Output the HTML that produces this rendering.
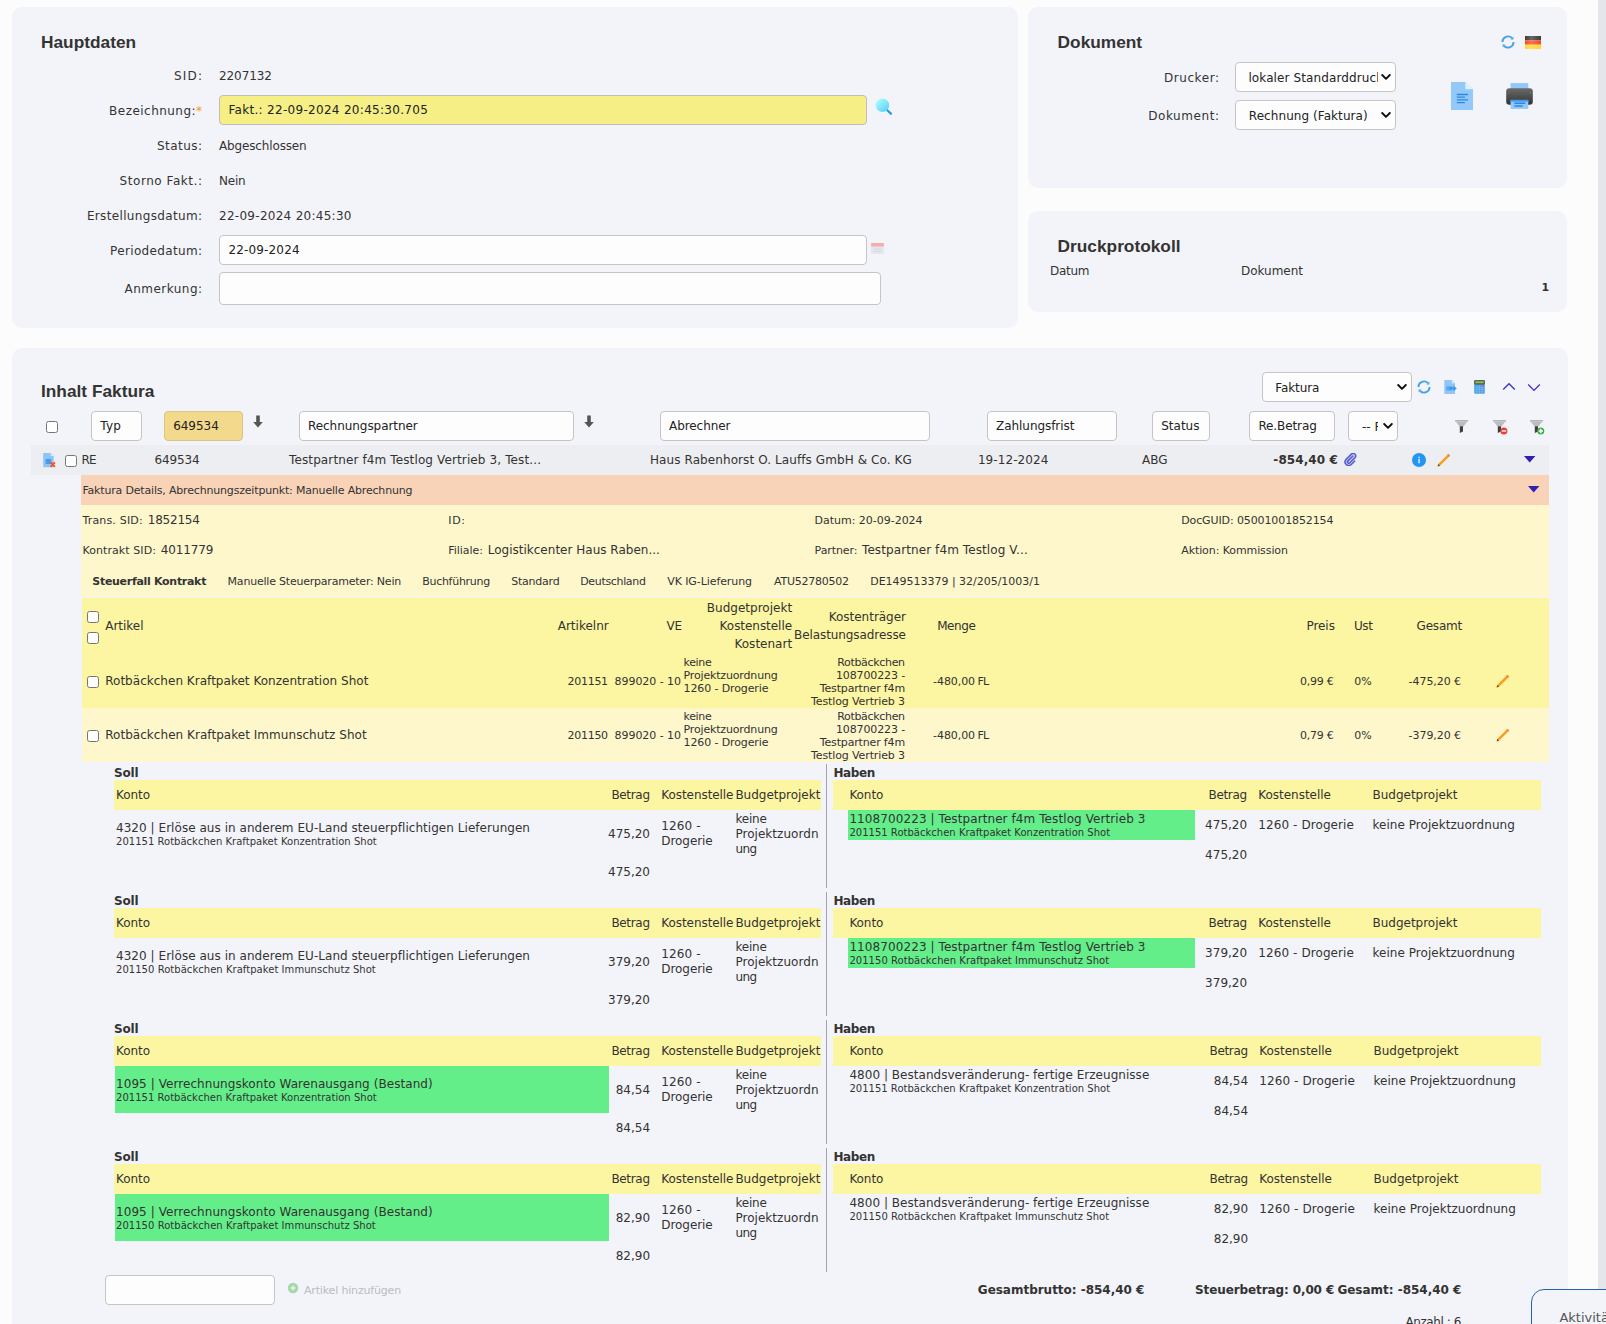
<!DOCTYPE html>
<html lang="de"><head><meta charset="utf-8"><title>Faktura</title><style>
html,body{margin:0;padding:0}
body{width:1606px;height:1324px;overflow:hidden;position:relative;background:#fcfcfd;color:#333;font-family:"DejaVu Sans","Liberation Sans",sans-serif}
.b{position:absolute;display:block}
.t{position:absolute;white-space:nowrap;display:block}
.a{font-family:"Liberation Sans",sans-serif}
</style></head><body>
<div class="b" style="left:12px;top:7px;width:1006px;height:321px;background:#f3f4f9;border-radius:10px;"></div>
<div class="b" style="left:1028px;top:7px;width:539px;height:181px;background:#f3f4f9;border-radius:10px;"></div>
<div class="b" style="left:1028px;top:211px;width:539px;height:101px;background:#f3f4f9;border-radius:10px;"></div>
<div class="b" style="left:12px;top:348px;width:1556px;height:1052px;background:#f3f4f9;border-radius:10px;"></div>
<div class="b" style="left:1598px;top:0px;width:8px;height:1324px;background:#e5e6eb;"></div>
<span class="t a" style="top:31.51px;font-size:17.3px;line-height:21px;left:41.00px;font-weight:bold;color:#333;">Hauptdaten</span>
<span class="t" style="top:67.85px;font-size:12px;line-height:16px;right:1402.80px;letter-spacing:1.200px;">SID:</span>
<span class="t" style="top:102.85px;font-size:12px;line-height:16px;right:1403.53px;letter-spacing:0.466px;">Bezeichnung:<span style="color:#f7941d">*</span></span>
<span class="t" style="top:137.85px;font-size:12px;line-height:16px;right:1403.53px;letter-spacing:0.470px;">Status:</span>
<span class="t" style="top:172.85px;font-size:12px;line-height:16px;right:1403.45px;letter-spacing:0.548px;">Storno Fakt.:</span>
<span class="t" style="top:207.85px;font-size:12px;line-height:16px;right:1403.66px;letter-spacing:0.342px;">Erstellungsdatum:</span>
<span class="t" style="top:242.85px;font-size:12px;line-height:16px;right:1403.66px;letter-spacing:0.339px;">Periodedatum:</span>
<span class="t" style="top:280.85px;font-size:12px;line-height:16px;right:1403.53px;letter-spacing:0.469px;">Anmerkung:</span>
<span class="t" style="top:67.85px;font-size:12px;line-height:16px;left:219.00px;letter-spacing:-0.076px;">2207132</span>
<div class="b" style="left:219px;top:95px;width:648px;height:30px;background:#f5ef85;border:1px solid #c4bcbc;border-radius:4px;box-sizing:border-box;"></div>
<span class="t" style="top:101.85px;font-size:12px;line-height:16px;left:228.40px;color:#222;letter-spacing:0.305px;">Fakt.: 22-09-2024 20:45:30.705</span>
<span class="t" style="top:137.85px;font-size:12px;line-height:16px;left:219.00px;letter-spacing:-0.146px;">Abgeschlossen</span>
<span class="t" style="top:172.85px;font-size:12px;line-height:16px;left:219.00px;letter-spacing:-0.237px;">Nein</span>
<span class="t" style="top:207.85px;font-size:12px;line-height:16px;left:219.00px;letter-spacing:0.280px;">22-09-2024 20:45:30</span>
<div class="b" style="left:219px;top:235px;width:648px;height:30px;background:#fdfdfe;border:1px solid #c8c3c5;border-radius:4px;box-sizing:border-box;"></div>
<span class="t" style="top:241.85px;font-size:12px;line-height:16px;left:228.40px;color:#222;letter-spacing:0.161px;">22-09-2024</span>
<div class="b" style="left:219px;top:272px;width:662px;height:33px;background:#fdfdfe;border:1px solid #c8c3c5;border-radius:4px;box-sizing:border-box;"></div>
<svg class="b" style="left:875px;top:98px" width="19" height="19" viewBox="0 0 19 19"><defs><linearGradient id="mg" x1="0.15" y1="0.1" x2="0.85" y2="0.9"><stop offset="0" stop-color="#a8fbff"/><stop offset="1" stop-color="#5fd3f4"/></linearGradient></defs><path d="M12 12 L15.9 15.7" stroke="#2b9be0" stroke-width="2.3" stroke-linecap="round"/><circle cx="7.45" cy="7.25" r="6.7" fill="url(#mg)"/></svg>
<svg class="b" style="left:870px;top:241px" width="15" height="14" viewBox="0 0 15 14"><rect x="1" y="2" width="13" height="11" rx="1.5" fill="#e6e7ec"/><rect x="1" y="2" width="13" height="3.5" rx="1" fill="#f3aeae"/><path d="M3.5 8h8M3.5 10.5h8" stroke="#d5d8de" stroke-width="1"/></svg>
<span class="t a" style="top:31.51px;font-size:17.3px;line-height:21px;left:1057.60px;font-weight:bold;color:#333;">Dokument</span>
<span class="t" style="top:69.85px;font-size:12px;line-height:16px;right:386.42px;letter-spacing:0.579px;">Drucker:</span>
<span class="t" style="top:107.85px;font-size:12px;line-height:16px;right:386.43px;letter-spacing:0.575px;">Dokument:</span>
<div class="b" style="left:1235px;top:62px;width:161px;height:30px;background:#fdfdfe;border:1px solid #c8c3c5;border-radius:4px;box-sizing:border-box;"></div>
<span class="t" style="top:70.05px;font-size:12px;line-height:16px;left:1248.40px;color:#222;letter-spacing:0.11px;width:129.3px;overflow:hidden;">lokaler Standarddrucker</span>
<svg class="b" style="left:1381px;top:72.7px" width="10" height="8" viewBox="0 0 10 8"><path d="M1.2 2 L5 5.8 L8.8 2" fill="none" stroke="#111" stroke-width="1.9" stroke-linecap="round" stroke-linejoin="round"/></svg>
<div class="b" style="left:1235px;top:100px;width:161px;height:30px;background:#fdfdfe;border:1px solid #c8c3c5;border-radius:4px;box-sizing:border-box;"></div>
<span class="t" style="top:108.05px;font-size:12px;line-height:16px;left:1248.80px;color:#222;letter-spacing:0.070px;">Rechnung (Faktura)</span>
<svg class="b" style="left:1381px;top:110.7px" width="10" height="8" viewBox="0 0 10 8"><path d="M1.2 2 L5 5.8 L8.8 2" fill="none" stroke="#111" stroke-width="1.9" stroke-linecap="round" stroke-linejoin="round"/></svg>
<svg class="b" style="left:1501px;top:35px" width="14" height="14" viewBox="0 0 14 14"><g fill="none" stroke="#45a3e8" stroke-width="1.9"><path d="M1.4 6.9A5.6 5.6 0 0 1 10.9 3"/><path d="M12.6 7.1A5.6 5.6 0 0 1 3.1 11"/></g><path d="M12.4 4.6 L12.4 1.6 L9.5 4.4Z" fill="#45a3e8"/><path d="M1.6 9.4 L1.6 12.4 L4.5 9.6Z" fill="#45a3e8"/></svg>
<svg class="b" style="left:1525px;top:35.8px" width="16" height="13" viewBox="0 0 16 13"><defs><linearGradient id="gl" x1="0" y1="0" x2="1" y2="0"><stop offset="0" stop-color="#fff" stop-opacity="0"/><stop offset="0.4" stop-color="#fff" stop-opacity="0.22"/><stop offset="1" stop-color="#fff" stop-opacity="0"/></linearGradient></defs><rect x="0" y="0" width="16" height="4.4" fill="#3d3d3d"/><rect x="0" y="4.4" width="16" height="4.3" fill="#fb4a1c"/><rect x="0" y="8.7" width="16" height="4.3" fill="#ffd832"/><rect x="0" y="0" width="16" height="13" fill="url(#gl)"/></svg>
<svg class="b" style="left:1451px;top:82px" width="22" height="28" viewBox="0 0 22 28"><path d="M0 0h14.4l7.6 7.2v20.8h-22z" fill="#93c9f8"/><path d="M14.4 0v7.2h7.6z" fill="#e0f0fd"/><path d="M5.8 12.5h11.2M5.8 17.9h11.2" stroke="#2f86de" stroke-width="1.3"/><path d="M5.8 15.2h8.1M5.8 20.6h8.1" stroke="#2f86de" stroke-width="1.3"/></svg>
<svg class="b" style="left:1505.5px;top:83px" width="27" height="26" viewBox="0 0 27 26"><defs><linearGradient id="pg" x1="0" y1="0" x2="0" y2="1"><stop offset="0" stop-color="#6a6a6a"/><stop offset="1" stop-color="#333"/></linearGradient></defs><rect x="4.6" y="0.1" width="17.7" height="7.5" fill="#90c8f8"/><rect x="0.2" y="5.3" width="26.6" height="16.4" rx="3.2" fill="url(#pg)"/><rect x="4.6" y="16.9" width="17.7" height="9" fill="#90c8f8"/><rect x="4.6" y="16.9" width="17.7" height="1.8" fill="#3d9bef"/><path d="M8.4 20.3h10.8M8.4 23h8.2" stroke="#2f86de" stroke-width="1.4"/><circle cx="24.2" cy="9.7" r="0.8" fill="#2fae62"/></svg>
<span class="t a" style="top:235.51px;font-size:17.3px;line-height:21px;left:1057.60px;font-weight:bold;color:#333;">Druckprotokoll</span>
<span class="t" style="top:262.85px;font-size:12px;line-height:16px;left:1050.00px;letter-spacing:-0.298px;">Datum</span>
<span class="t" style="top:262.85px;font-size:12px;line-height:16px;left:1241.00px;letter-spacing:-0.022px;">Dokument</span>
<span class="t" style="top:279.69px;font-size:11px;line-height:15px;left:1541.50px;font-weight:bold;">1</span>
<span class="t a" style="top:381.01px;font-size:17.3px;line-height:21px;left:41.00px;font-weight:bold;color:#333;">Inhalt Faktura</span>
<div class="b" style="left:1262px;top:372px;width:150px;height:30px;background:#fdfdfe;border:1px solid #c8c3c5;border-radius:4px;box-sizing:border-box;"></div>
<span class="t" style="top:380.05px;font-size:12px;line-height:16px;left:1275.30px;color:#222;letter-spacing:-0.117px;">Faktura</span>
<svg class="b" style="left:1397px;top:382.7px" width="10" height="8" viewBox="0 0 10 8"><path d="M1.2 2 L5 5.8 L8.8 2" fill="none" stroke="#111" stroke-width="1.9" stroke-linecap="round" stroke-linejoin="round"/></svg>
<svg class="b" style="left:1417px;top:380px" width="14" height="14" viewBox="0 0 14 14"><g fill="none" stroke="#45a3e8" stroke-width="1.9"><path d="M1.4 6.9A5.6 5.6 0 0 1 10.9 3"/><path d="M12.6 7.1A5.6 5.6 0 0 1 3.1 11"/></g><path d="M12.4 4.6 L12.4 1.6 L9.5 4.4Z" fill="#45a3e8"/><path d="M1.6 9.4 L1.6 12.4 L4.5 9.6Z" fill="#45a3e8"/></svg>
<svg class="b" style="left:1443.5px;top:380px" width="13" height="14" viewBox="0 0 13 14"><path d="M0.3 0h7.5l3.2 3.2v10.8h-10.7z" fill="#93c6f6"/><path d="M7.8 0v3.2h3.2z" fill="#d3e8fb"/><rect x="2.3" y="6.2" width="6" height="4.4" fill="#5aa9ef"/><path d="M5 7.3h4.6v-1.7l3.2 2.8l-3.2 2.8v-1.7h-4.6z" fill="#3d9bef"/></svg>
<svg class="b" style="left:1473.5px;top:380px" width="11" height="14" viewBox="0 0 11 14"><rect x="0.2" y="0.2" width="10.6" height="13.6" rx="1" fill="#4a9eea"/><rect x="0.2" y="0.2" width="10.6" height="4.2" rx="0.8" fill="#4b4f47"/><rect x="1.2" y="1.3" width="8.6" height="2" fill="#8bc34a"/><path d="M3 5v8.6M5.5 5v8.6M8 5v8.6M0.4 7.4h10.2M0.4 9.6h10.2M0.4 11.8h10.2" stroke="#8cc3f3" stroke-width="0.5"/><rect x="8.2" y="5.2" width="1.4" height="1.6" fill="#e0506a"/></svg>
<svg class="b" style="left:1502px;top:382px" width="14" height="9" viewBox="0 0 14 9"><path d="M1.2 7.6 L7 1.8 L12.8 7.6" fill="none" stroke="#3c35c9" stroke-width="1.35"/></svg>
<svg class="b" style="left:1527px;top:383px" width="14" height="9" viewBox="0 0 14 9"><path d="M1.2 1.6 L7 7.4 L12.8 1.6" fill="none" stroke="#3c35c9" stroke-width="1.35"/></svg>
<svg class="b" style="left:1454.5px;top:419.6px" width="13" height="14" viewBox="0 0 13 14"><path d="M0 0.3h13v1.1h-13z" fill="#9a9a9a"/><path d="M0.6 1.4h11.8l-4 5h-3.8z" fill="#bdbdbd"/><path d="M4.8 6.2h3.2v5.2l-3.2 1.6z" fill="#3f3f3f"/></svg>
<svg class="b" style="left:1492.7px;top:419.6px" width="15" height="15" viewBox="0 0 15 15"><path d="M0 0.3h13v1.1h-13z" fill="#9a9a9a"/><path d="M0.6 1.4h11.8l-4 5h-3.8z" fill="#bdbdbd"/><path d="M4.8 6.2h3.2v5.2l-3.2 1.6z" fill="#3f3f3f"/><circle cx="10.9" cy="11" r="3.5" fill="#f03e33"/><rect x="8.7" y="10.3" width="4.4" height="1.4" fill="#fff"/></svg>
<svg class="b" style="left:1529.8px;top:419.6px" width="15" height="15" viewBox="0 0 15 15"><path d="M0 0.3h13v1.1h-13z" fill="#9a9a9a"/><path d="M0.6 1.4h11.8l-4 5h-3.8z" fill="#bdbdbd"/><path d="M4.8 6.2h3.2v5.2l-3.2 1.6z" fill="#3f3f3f"/><circle cx="10.8" cy="11" r="3.5" fill="#3fae49"/><rect x="8.6" y="10.3" width="4.4" height="1.4" fill="#fff"/><rect x="10.1" y="8.8" width="1.4" height="4.4" fill="#fff"/></svg>
<div class="b" style="left:45.5px;top:421px;width:12.0px;height:12px;background:#fff;border:1px solid #767676;border-radius:2.5px;box-sizing:border-box;"></div>
<div class="b" style="left:91px;top:411px;width:50.5px;height:30px;background:#fdfdfe;border:1px solid #c8c3c5;border-radius:4px;box-sizing:border-box;"></div>
<span class="t" style="top:418.15px;font-size:12px;line-height:16px;left:100.20px;color:#222;letter-spacing:0.256px;">Typ</span>
<div class="b" style="left:164px;top:411px;width:78.5px;height:30px;background:#f3d98b;border:1px solid #d9c58a;border-radius:4px;box-sizing:border-box;"></div>
<span class="t" style="top:418.15px;font-size:12px;line-height:16px;left:173.20px;color:#222;letter-spacing:-0.042px;">649534</span>
<div class="b" style="left:299px;top:411px;width:274.5px;height:30px;background:#fdfdfe;border:1px solid #c8c3c5;border-radius:4px;box-sizing:border-box;"></div>
<span class="t" style="top:418.15px;font-size:12px;line-height:16px;left:308.00px;color:#222;letter-spacing:-0.054px;">Rechnungspartner</span>
<div class="b" style="left:660px;top:411px;width:269.5px;height:30px;background:#fdfdfe;border:1px solid #c8c3c5;border-radius:4px;box-sizing:border-box;"></div>
<span class="t" style="top:418.15px;font-size:12px;line-height:16px;left:669.00px;color:#222;letter-spacing:-0.064px;">Abrechner</span>
<div class="b" style="left:987px;top:411px;width:129.5px;height:30px;background:#fdfdfe;border:1px solid #c8c3c5;border-radius:4px;box-sizing:border-box;"></div>
<span class="t" style="top:418.15px;font-size:12px;line-height:16px;left:996.10px;color:#222;letter-spacing:-0.062px;">Zahlungsfrist</span>
<div class="b" style="left:1152px;top:411px;width:57.5px;height:30px;background:#fdfdfe;border:1px solid #c8c3c5;border-radius:4px;box-sizing:border-box;"></div>
<span class="t" style="top:418.15px;font-size:12px;line-height:16px;left:1161.20px;color:#222;letter-spacing:0.010px;">Status</span>
<div class="b" style="left:1249px;top:411px;width:85.5px;height:30px;background:#fdfdfe;border:1px solid #c8c3c5;border-radius:4px;box-sizing:border-box;"></div>
<span class="t" style="top:418.15px;font-size:12px;line-height:16px;left:1258.40px;color:#222;letter-spacing:-0.104px;">Re.Betrag</span>
<div class="b" style="left:1348px;top:411px;width:49.5px;height:30px;background:#fdfdfe;border:1px solid #c8c3c5;border-radius:4px;box-sizing:border-box;"></div>
<span class="t" style="top:419.05px;font-size:12px;line-height:16px;left:1362.00px;color:#222;width:15.6px;overflow:hidden;">-- F</span>
<svg class="b" style="left:1382.5px;top:421.7px" width="10" height="8" viewBox="0 0 10 8"><path d="M1.2 2 L5 5.8 L8.8 2" fill="none" stroke="#111" stroke-width="1.9" stroke-linecap="round" stroke-linejoin="round"/></svg>
<svg class="b" style="left:253px;top:415px" width="10" height="13" viewBox="0 0 10 13"><path d="M3.2 0.5h3.6v6.5h3l-4.8 5.5l-4.8-5.5h3z" fill="#555"/></svg>
<svg class="b" style="left:584px;top:415px" width="10" height="13" viewBox="0 0 10 13"><path d="M3.2 0.5h3.6v6.5h3l-4.8 5.5l-4.8-5.5h3z" fill="#555"/></svg>
<div class="b" style="left:31px;top:445px;width:1518px;height:30px;background:#edeef1;"></div>
<div class="b" style="left:65.3px;top:455px;width:12.0px;height:12px;background:#fff;border:1px solid #767676;border-radius:2.5px;box-sizing:border-box;"></div>
<span class="t" style="top:452.35px;font-size:12px;line-height:16px;left:81.50px;letter-spacing:-0.722px;">RE</span>
<span class="t" style="top:452.35px;font-size:12px;line-height:16px;left:154.50px;letter-spacing:-0.142px;">649534</span>
<span class="t" style="top:452.35px;font-size:12px;line-height:16px;left:289.00px;letter-spacing:0.124px;">Testpartner f4m Testlog Vertrieb 3, Test...</span>
<span class="t" style="top:452.35px;font-size:12px;line-height:16px;left:650.00px;letter-spacing:0.089px;">Haus Rabenhorst O. Lauffs GmbH &amp; Co. KG</span>
<span class="t" style="top:452.35px;font-size:12px;line-height:16px;left:977.90px;letter-spacing:0.083px;">19-12-2024</span>
<span class="t" style="top:452.35px;font-size:12px;line-height:16px;left:1142.10px;letter-spacing:-0.016px;">ABG</span>
<span class="t" style="top:452.35px;font-size:12px;line-height:16px;right:268.12px;font-weight:bold;letter-spacing:0.084px;">-854,40 €</span>
<svg class="b" style="left:42.6px;top:452.8px" width="13" height="15" viewBox="0 0 13 15"><path d="M0.2 0h7.6l2.9 2.9v11.4h-10.5z" fill="#8ec5f7"/><path d="M7.8 0v2.9h2.9z" fill="#d6eafc"/><rect x="2.6" y="6" width="5.6" height="5" fill="#4a9be8"/><path d="M7.6 9.4 L12 13.8 M12 9.4 L7.6 13.8" stroke="#f4511e" stroke-width="1.7"/></svg>
<svg class="b" style="left:1343.8px;top:452.9px" width="13" height="13" viewBox="0 0 13 13"><g transform="scale(0.92)"><path d="M9.6 3.3 L4.2 8.7 a1.4 1.4 0 0 0 2 2 L12 4.9 a2.7 2.7 0 0 0 -3.8 -3.8 L2.2 7.1 a3.9 3.9 0 0 0 5.5 5.5 L11.5 8.8" fill="none" stroke="#7d85e0" stroke-width="2.1" stroke-linecap="round" opacity="0.8"/><path d="M9.6 3.3 L4.2 8.7 a1.4 1.4 0 0 0 2 2 L12 4.9 a2.7 2.7 0 0 0 -3.8 -3.8 L2.2 7.1 a3.9 3.9 0 0 0 5.5 5.5 L11.5 8.8" fill="none" stroke="#535bcc" stroke-width="1.2" stroke-linecap="round"/></g></svg>
<svg class="b" style="left:1411.9px;top:452.9px" width="14" height="14" viewBox="0 0 14 14"><circle cx="7" cy="7" r="7" fill="#2196f3"/><rect x="6.3" y="6" width="1.5" height="4.3" fill="#fff" opacity="0.82"/><rect x="6.3" y="3.7" width="1.5" height="1.5" fill="#fff" opacity="0.82"/></svg>
<svg class="b" style="left:1437px;top:453px" width="14" height="14" viewBox="0 0 14 14"><path d="M1.6 12.4 L12.4 1.6" stroke="#f7a01b" stroke-width="2.6"/><path d="M11.2 0.9 L13.1 2.8 L12.1 3.8 L10.2 1.9Z" fill="#ee7f86"/><path d="M0.5 13.5 L1.3 10.9 L3.1 12.7Z" fill="#5d5138"/></svg>
<svg class="b" style="left:1524px;top:456.3px" width="12" height="7" viewBox="0 0 12 7"><path d="M0 0h11.4l-5.7 6.6z" fill="#2e1fb8"/></svg>
<div class="b" style="left:81px;top:475px;width:1468px;height:30px;background:#f8d3b8;"></div>
<svg class="b" style="left:1528px;top:486.2px" width="12" height="7" viewBox="0 0 12 7"><path d="M0 0h11.4l-5.7 6.6z" fill="#2e1fb8"/></svg>
<span class="t" style="top:482.69px;font-size:11px;line-height:15px;left:82.40px;letter-spacing:-0.179px;">Faktura Details, Abrechnungszeitpunkt: Manuelle Abrechnung</span>
<div class="b" style="left:81px;top:505px;width:1468px;height:92px;background:#fef7cc;"></div>
<span class="t" style="top:512.69px;font-size:11px;line-height:15px;left:82.40px;letter-spacing:0.183px;">Trans. SID:</span>
<span class="t" style="top:511.85px;font-size:12px;line-height:16px;left:147.80px;letter-spacing:-0.226px;">1852154</span>
<span class="t" style="top:512.69px;font-size:11px;line-height:15px;left:448.30px;letter-spacing:0.639px;">ID:</span>
<span class="t" style="top:512.69px;font-size:11px;line-height:15px;left:814.60px;letter-spacing:-0.021px;">Datum: 20-09-2024</span>
<span class="t" style="top:512.69px;font-size:11px;line-height:15px;left:1181.20px;letter-spacing:-0.111px;">DocGUID: 05001001852154</span>
<span class="t" style="top:542.69px;font-size:11px;line-height:15px;left:82.40px;letter-spacing:0.081px;">Kontrakt SID:</span>
<span class="t" style="top:541.85px;font-size:12px;line-height:16px;left:160.70px;letter-spacing:-0.142px;">4011779</span>
<span class="t" style="top:542.69px;font-size:11px;line-height:15px;left:448.30px;letter-spacing:-0.053px;">Filiale:</span>
<span class="t" style="top:541.85px;font-size:12px;line-height:16px;left:487.70px;letter-spacing:0.009px;">Logistikcenter Haus Raben...</span>
<span class="t" style="top:542.69px;font-size:11px;line-height:15px;left:814.60px;letter-spacing:-0.086px;">Partner:</span>
<span class="t" style="top:541.85px;font-size:12px;line-height:16px;left:862.00px;letter-spacing:0.093px;">Testpartner f4m Testlog V...</span>
<span class="t" style="top:542.69px;font-size:11px;line-height:15px;left:1181.20px;letter-spacing:-0.087px;">Aktion: Kommission</span>
<span class="t" style="top:573.69px;font-size:11px;line-height:15px;left:92.30px;font-weight:bold;letter-spacing:-0.291px;">Steuerfall Kontrakt</span>
<span class="t" style="top:573.69px;font-size:11px;line-height:15px;left:227.60px;letter-spacing:-0.212px;">Manuelle Steuerparameter: Nein</span>
<span class="t" style="top:573.69px;font-size:11px;line-height:15px;left:422.20px;letter-spacing:-0.281px;">Buchführung</span>
<span class="t" style="top:573.69px;font-size:11px;line-height:15px;left:511.20px;letter-spacing:-0.221px;">Standard</span>
<span class="t" style="top:573.69px;font-size:11px;line-height:15px;left:580.20px;letter-spacing:-0.333px;">Deutschland</span>
<span class="t" style="top:573.69px;font-size:11px;line-height:15px;left:667.20px;letter-spacing:-0.080px;">VK IG-Lieferung</span>
<span class="t" style="top:573.69px;font-size:11px;line-height:15px;left:774.10px;letter-spacing:-0.254px;">ATU52780502</span>
<span class="t" style="top:573.69px;font-size:11px;line-height:15px;left:870.20px;letter-spacing:-0.016px;">DE149513379 | 32/205/1003/1</span>
<div class="b" style="left:82px;top:598px;width:1467px;height:110px;background:#fcf5a1;"></div>
<div class="b" style="left:82px;top:708px;width:1467px;height:54px;background:#fef7cc;"></div>
<div class="b" style="left:87.3px;top:611px;width:12.0px;height:12px;background:#fff;border:1px solid #767676;border-radius:2.5px;box-sizing:border-box;"></div>
<div class="b" style="left:87.3px;top:632px;width:12.0px;height:12px;background:#fff;border:1px solid #767676;border-radius:2.5px;box-sizing:border-box;"></div>
<span class="t" style="top:617.85px;font-size:12px;line-height:16px;left:105.20px;letter-spacing:-0.004px;">Artikel</span>
<span class="t" style="top:617.85px;font-size:12px;line-height:16px;right:997.30px;letter-spacing:0.004px;">Artikelnr</span>
<span class="t" style="top:617.85px;font-size:12px;line-height:16px;left:666.60px;letter-spacing:-0.197px;">VE</span>
<span class="t" style="top:599.85px;font-size:12px;line-height:16px;right:813.89px;letter-spacing:0.011px;">Budgetprojekt</span>
<span class="t" style="top:617.85px;font-size:12px;line-height:16px;right:813.94px;letter-spacing:-0.041px;">Kostenstelle</span>
<span class="t" style="top:635.85px;font-size:12px;line-height:16px;right:813.90px;letter-spacing:0.005px;">Kostenart</span>
<span class="t" style="top:608.85px;font-size:12px;line-height:16px;right:700.03px;letter-spacing:-0.026px;">Kostenträger</span>
<span class="t" style="top:626.85px;font-size:12px;line-height:16px;right:700.08px;letter-spacing:-0.078px;">Belastungsadresse</span>
<span class="t" style="top:617.85px;font-size:12px;line-height:16px;left:937.20px;letter-spacing:-0.436px;">Menge</span>
<span class="t" style="top:617.85px;font-size:12px;line-height:16px;right:271.14px;letter-spacing:-0.043px;">Preis</span>
<span class="t" style="top:617.85px;font-size:12px;line-height:16px;left:1353.90px;letter-spacing:-0.375px;">Ust</span>
<span class="t" style="top:617.85px;font-size:12px;line-height:16px;right:144.02px;letter-spacing:-0.217px;">Gesamt</span>
<div class="b" style="left:87.3px;top:675.5px;width:12.0px;height:12.0px;background:#fff;border:1px solid #767676;border-radius:2.5px;box-sizing:border-box;"></div>
<span class="t" style="top:673.15px;font-size:12px;line-height:16px;left:105.20px;letter-spacing:0.025px;">Rotbäckchen Kraftpaket Konzentration Shot</span>
<span class="t" style="top:673.99px;font-size:11px;line-height:15px;right:998.20px;letter-spacing:-0.300px;">201151</span>
<span class="t" style="top:673.99px;font-size:11px;line-height:15px;left:614.60px;letter-spacing:-0.055px;">899020 - 10</span>
<span class="t" style="top:656.19px;font-size:11px;line-height:13px;left:683.50px;letter-spacing:-0.312px;">keine</span>
<span class="t" style="top:669.19px;font-size:11px;line-height:13px;left:683.50px;letter-spacing:-0.157px;">Projektzuordnung</span>
<span class="t" style="top:682.19px;font-size:11px;line-height:13px;left:683.50px;letter-spacing:-0.110px;">1260 - Drogerie</span>
<span class="t" style="top:656.19px;font-size:11px;line-height:13px;right:701.22px;letter-spacing:-0.319px;">Rotbäckchen</span>
<span class="t" style="top:669.19px;font-size:11px;line-height:13px;right:701.04px;letter-spacing:-0.135px;">108700223 -</span>
<span class="t" style="top:682.19px;font-size:11px;line-height:13px;right:701.06px;letter-spacing:-0.163px;">Testpartner f4m</span>
<span class="t" style="top:695.19px;font-size:11px;line-height:13px;right:701.02px;letter-spacing:-0.119px;">Testlog Vertrieb 3</span>
<span class="t" style="top:673.99px;font-size:11px;line-height:15px;left:933.10px;letter-spacing:-0.078px;">-480,00</span>
<span class="t" style="top:673.99px;font-size:11px;line-height:15px;left:977.60px;letter-spacing:-0.800px;">FL</span>
<span class="t" style="top:673.99px;font-size:11px;line-height:15px;right:272.42px;letter-spacing:-0.220px;">0,99 €</span>
<span class="t" style="top:673.99px;font-size:11px;line-height:15px;left:1354.20px;letter-spacing:0.047px;">0%</span>
<span class="t" style="top:673.99px;font-size:11px;line-height:15px;right:144.96px;letter-spacing:-0.059px;">-475,20 €</span>
<svg class="b" style="left:1496px;top:674.2px" width="14" height="14" viewBox="0 0 14 14"><path d="M1.6 12.4 L12.4 1.6" stroke="#f7a01b" stroke-width="2.6"/><path d="M11.2 0.9 L13.1 2.8 L12.1 3.8 L10.2 1.9Z" fill="#ee7f86"/><path d="M0.5 13.5 L1.3 10.9 L3.1 12.7Z" fill="#5d5138"/></svg>
<div class="b" style="left:87.3px;top:729.5px;width:12.0px;height:12.0px;background:#fff;border:1px solid #767676;border-radius:2.5px;box-sizing:border-box;"></div>
<span class="t" style="top:727.15px;font-size:12px;line-height:16px;left:105.20px;letter-spacing:0.042px;">Rotbäckchen Kraftpaket Immunschutz Shot</span>
<span class="t" style="top:727.99px;font-size:11px;line-height:15px;right:998.20px;letter-spacing:-0.300px;">201150</span>
<span class="t" style="top:727.99px;font-size:11px;line-height:15px;left:614.60px;letter-spacing:-0.055px;">899020 - 10</span>
<span class="t" style="top:710.19px;font-size:11px;line-height:13px;left:683.50px;letter-spacing:-0.312px;">keine</span>
<span class="t" style="top:723.19px;font-size:11px;line-height:13px;left:683.50px;letter-spacing:-0.157px;">Projektzuordnung</span>
<span class="t" style="top:736.19px;font-size:11px;line-height:13px;left:683.50px;letter-spacing:-0.110px;">1260 - Drogerie</span>
<span class="t" style="top:710.19px;font-size:11px;line-height:13px;right:701.22px;letter-spacing:-0.319px;">Rotbäckchen</span>
<span class="t" style="top:723.19px;font-size:11px;line-height:13px;right:701.04px;letter-spacing:-0.135px;">108700223 -</span>
<span class="t" style="top:736.19px;font-size:11px;line-height:13px;right:701.06px;letter-spacing:-0.163px;">Testpartner f4m</span>
<span class="t" style="top:749.19px;font-size:11px;line-height:13px;right:701.02px;letter-spacing:-0.119px;">Testlog Vertrieb 3</span>
<span class="t" style="top:727.99px;font-size:11px;line-height:15px;left:933.10px;letter-spacing:-0.078px;">-480,00</span>
<span class="t" style="top:727.99px;font-size:11px;line-height:15px;left:977.60px;letter-spacing:-0.800px;">FL</span>
<span class="t" style="top:727.99px;font-size:11px;line-height:15px;right:272.42px;letter-spacing:-0.220px;">0,79 €</span>
<span class="t" style="top:727.99px;font-size:11px;line-height:15px;left:1354.20px;letter-spacing:0.047px;">0%</span>
<span class="t" style="top:727.99px;font-size:11px;line-height:15px;right:144.96px;letter-spacing:-0.059px;">-379,20 €</span>
<svg class="b" style="left:1496px;top:728.2px" width="14" height="14" viewBox="0 0 14 14"><path d="M1.6 12.4 L12.4 1.6" stroke="#f7a01b" stroke-width="2.6"/><path d="M11.2 0.9 L13.1 2.8 L12.1 3.8 L10.2 1.9Z" fill="#ee7f86"/><path d="M0.5 13.5 L1.3 10.9 L3.1 12.7Z" fill="#5d5138"/></svg>
<span class="t" style="top:765.25px;font-size:12px;line-height:16px;left:114.00px;font-weight:bold;letter-spacing:-0.208px;">Soll</span>
<span class="t" style="top:765.25px;font-size:12px;line-height:16px;left:833.50px;font-weight:bold;letter-spacing:-0.430px;">Haben</span>
<div class="b" style="left:114px;top:780px;width:707px;height:30px;background:#fcf5a1;"></div>
<div class="b" style="left:833px;top:780px;width:708px;height:30px;background:#fcf5a1;"></div>
<span class="t" style="top:787.15px;font-size:12px;line-height:16px;left:116.00px;letter-spacing:-0.066px;">Konto</span>
<span class="t" style="top:787.15px;font-size:12px;line-height:16px;right:956.33px;letter-spacing:-0.327px;">Betrag</span>
<span class="t" style="top:787.15px;font-size:12px;line-height:16px;left:661.30px;letter-spacing:-0.068px;">Kostenstelle</span>
<span class="t" style="top:787.15px;font-size:12px;line-height:16px;left:735.40px;letter-spacing:-0.014px;">Budgetprojekt</span>
<span class="t" style="top:787.15px;font-size:12px;line-height:16px;left:849.40px;letter-spacing:-0.066px;">Konto</span>
<span class="t" style="top:787.15px;font-size:12px;line-height:16px;right:359.23px;letter-spacing:-0.327px;">Betrag</span>
<span class="t" style="top:787.15px;font-size:12px;line-height:16px;left:1258.30px;letter-spacing:-0.032px;">Kostenstelle</span>
<span class="t" style="top:787.15px;font-size:12px;line-height:16px;left:1372.50px;letter-spacing:-0.014px;">Budgetprojekt</span>
<div class="b" style="left:826px;top:764px;width:1px;height:124px;background:#a3a3a8;"></div>
<span class="t" style="top:820.25px;font-size:12px;line-height:16px;left:116.00px;letter-spacing:0.044px;">4320 | Erlöse aus in anderem EU-Land steuerpflichtigen Lieferungen</span>
<span class="t" style="top:835.24px;font-size:10px;line-height:14px;left:116.00px;letter-spacing:0.018px;">201151 Rotbäckchen Kraftpaket Konzentration Shot</span>
<span class="t" style="top:826.05px;font-size:12px;line-height:16px;right:956.00px;letter-spacing:0.000px;">475,20</span>
<span class="t" style="top:817.85px;font-size:12px;line-height:16px;left:661.30px;letter-spacing:0.103px;">1260 -</span>
<span class="t" style="top:832.85px;font-size:12px;line-height:16px;left:661.30px;letter-spacing:-0.072px;">Drogerie</span>
<span class="t" style="top:811.25px;font-size:12px;line-height:16px;left:735.40px;letter-spacing:-0.209px;">keine</span>
<span class="t" style="top:826.25px;font-size:12px;line-height:16px;left:735.40px;letter-spacing:0.041px;">Projektzuordn</span>
<span class="t" style="top:841.25px;font-size:12px;line-height:16px;left:735.40px;letter-spacing:-0.514px;">ung</span>
<span class="t" style="top:864.05px;font-size:12px;line-height:16px;right:956.00px;letter-spacing:0.000px;">475,20</span>
<div class="b" style="left:848px;top:810px;width:347px;height:30px;background:#63ee8a;"></div>
<span class="t" style="top:811.25px;font-size:12px;line-height:16px;left:849.40px;letter-spacing:0.086px;">1108700223 | Testpartner f4m Testlog Vertrieb 3</span>
<span class="t" style="top:826.24px;font-size:10px;line-height:14px;left:849.40px;letter-spacing:0.018px;">201151 Rotbäckchen Kraftpaket Konzentration Shot</span>
<span class="t" style="top:817.15px;font-size:12px;line-height:16px;right:358.90px;letter-spacing:0.000px;">475,20</span>
<span class="t" style="top:817.15px;font-size:12px;line-height:16px;left:1258.30px;letter-spacing:0.085px;">1260 - Drogerie</span>
<span class="t" style="top:817.15px;font-size:12px;line-height:16px;left:1372.50px;letter-spacing:0.040px;">keine Projektzuordnung</span>
<span class="t" style="top:847.15px;font-size:12px;line-height:16px;right:358.90px;letter-spacing:0.000px;">475,20</span>
<span class="t" style="top:893.25px;font-size:12px;line-height:16px;left:114.00px;font-weight:bold;letter-spacing:-0.208px;">Soll</span>
<span class="t" style="top:893.25px;font-size:12px;line-height:16px;left:833.50px;font-weight:bold;letter-spacing:-0.430px;">Haben</span>
<div class="b" style="left:114px;top:908px;width:707px;height:30px;background:#fcf5a1;"></div>
<div class="b" style="left:833px;top:908px;width:708px;height:30px;background:#fcf5a1;"></div>
<span class="t" style="top:915.15px;font-size:12px;line-height:16px;left:116.00px;letter-spacing:-0.066px;">Konto</span>
<span class="t" style="top:915.15px;font-size:12px;line-height:16px;right:956.33px;letter-spacing:-0.327px;">Betrag</span>
<span class="t" style="top:915.15px;font-size:12px;line-height:16px;left:661.30px;letter-spacing:-0.068px;">Kostenstelle</span>
<span class="t" style="top:915.15px;font-size:12px;line-height:16px;left:735.40px;letter-spacing:-0.014px;">Budgetprojekt</span>
<span class="t" style="top:915.15px;font-size:12px;line-height:16px;left:849.40px;letter-spacing:-0.066px;">Konto</span>
<span class="t" style="top:915.15px;font-size:12px;line-height:16px;right:359.23px;letter-spacing:-0.327px;">Betrag</span>
<span class="t" style="top:915.15px;font-size:12px;line-height:16px;left:1258.30px;letter-spacing:-0.032px;">Kostenstelle</span>
<span class="t" style="top:915.15px;font-size:12px;line-height:16px;left:1372.50px;letter-spacing:-0.014px;">Budgetprojekt</span>
<div class="b" style="left:826px;top:892px;width:1px;height:124px;background:#a3a3a8;"></div>
<span class="t" style="top:948.25px;font-size:12px;line-height:16px;left:116.00px;letter-spacing:0.044px;">4320 | Erlöse aus in anderem EU-Land steuerpflichtigen Lieferungen</span>
<span class="t" style="top:963.24px;font-size:10px;line-height:14px;left:116.00px;letter-spacing:0.041px;">201150 Rotbäckchen Kraftpaket Immunschutz Shot</span>
<span class="t" style="top:954.05px;font-size:12px;line-height:16px;right:956.00px;letter-spacing:0.000px;">379,20</span>
<span class="t" style="top:945.85px;font-size:12px;line-height:16px;left:661.30px;letter-spacing:0.103px;">1260 -</span>
<span class="t" style="top:960.85px;font-size:12px;line-height:16px;left:661.30px;letter-spacing:-0.072px;">Drogerie</span>
<span class="t" style="top:939.25px;font-size:12px;line-height:16px;left:735.40px;letter-spacing:-0.209px;">keine</span>
<span class="t" style="top:954.25px;font-size:12px;line-height:16px;left:735.40px;letter-spacing:0.041px;">Projektzuordn</span>
<span class="t" style="top:969.25px;font-size:12px;line-height:16px;left:735.40px;letter-spacing:-0.514px;">ung</span>
<span class="t" style="top:992.05px;font-size:12px;line-height:16px;right:956.00px;letter-spacing:0.000px;">379,20</span>
<div class="b" style="left:848px;top:938px;width:347px;height:30px;background:#63ee8a;"></div>
<span class="t" style="top:939.25px;font-size:12px;line-height:16px;left:849.40px;letter-spacing:0.086px;">1108700223 | Testpartner f4m Testlog Vertrieb 3</span>
<span class="t" style="top:954.24px;font-size:10px;line-height:14px;left:849.40px;letter-spacing:0.041px;">201150 Rotbäckchen Kraftpaket Immunschutz Shot</span>
<span class="t" style="top:945.15px;font-size:12px;line-height:16px;right:358.90px;letter-spacing:0.000px;">379,20</span>
<span class="t" style="top:945.15px;font-size:12px;line-height:16px;left:1258.30px;letter-spacing:0.085px;">1260 - Drogerie</span>
<span class="t" style="top:945.15px;font-size:12px;line-height:16px;left:1372.50px;letter-spacing:0.040px;">keine Projektzuordnung</span>
<span class="t" style="top:975.15px;font-size:12px;line-height:16px;right:358.90px;letter-spacing:0.000px;">379,20</span>
<span class="t" style="top:1021.25px;font-size:12px;line-height:16px;left:114.00px;font-weight:bold;letter-spacing:-0.208px;">Soll</span>
<span class="t" style="top:1021.25px;font-size:12px;line-height:16px;left:833.50px;font-weight:bold;letter-spacing:-0.430px;">Haben</span>
<div class="b" style="left:114px;top:1036px;width:707px;height:30px;background:#fcf5a1;"></div>
<div class="b" style="left:833px;top:1036px;width:708px;height:30px;background:#fcf5a1;"></div>
<span class="t" style="top:1043.15px;font-size:12px;line-height:16px;left:116.00px;letter-spacing:-0.066px;">Konto</span>
<span class="t" style="top:1043.15px;font-size:12px;line-height:16px;right:956.33px;letter-spacing:-0.327px;">Betrag</span>
<span class="t" style="top:1043.15px;font-size:12px;line-height:16px;left:661.30px;letter-spacing:-0.068px;">Kostenstelle</span>
<span class="t" style="top:1043.15px;font-size:12px;line-height:16px;left:735.40px;letter-spacing:-0.014px;">Budgetprojekt</span>
<span class="t" style="top:1043.15px;font-size:12px;line-height:16px;left:849.40px;letter-spacing:-0.066px;">Konto</span>
<span class="t" style="top:1043.15px;font-size:12px;line-height:16px;right:358.23px;letter-spacing:-0.327px;">Betrag</span>
<span class="t" style="top:1043.15px;font-size:12px;line-height:16px;left:1259.30px;letter-spacing:-0.032px;">Kostenstelle</span>
<span class="t" style="top:1043.15px;font-size:12px;line-height:16px;left:1373.50px;letter-spacing:-0.014px;">Budgetprojekt</span>
<div class="b" style="left:826px;top:1020px;width:1px;height:124px;background:#a3a3a8;"></div>
<div class="b" style="left:115px;top:1066px;width:494px;height:47px;background:#63ee8a;"></div>
<span class="t" style="top:1076.25px;font-size:12px;line-height:16px;left:116.00px;letter-spacing:0.065px;">1095 | Verrechnungskonto Warenausgang (Bestand)</span>
<span class="t" style="top:1091.24px;font-size:10px;line-height:14px;left:116.00px;letter-spacing:0.018px;">201151 Rotbäckchen Kraftpaket Konzentration Shot</span>
<span class="t" style="top:1082.05px;font-size:12px;line-height:16px;right:956.01px;letter-spacing:-0.015px;">84,54</span>
<span class="t" style="top:1073.85px;font-size:12px;line-height:16px;left:661.30px;letter-spacing:0.103px;">1260 -</span>
<span class="t" style="top:1088.85px;font-size:12px;line-height:16px;left:661.30px;letter-spacing:-0.072px;">Drogerie</span>
<span class="t" style="top:1067.25px;font-size:12px;line-height:16px;left:735.40px;letter-spacing:-0.209px;">keine</span>
<span class="t" style="top:1082.25px;font-size:12px;line-height:16px;left:735.40px;letter-spacing:0.041px;">Projektzuordn</span>
<span class="t" style="top:1097.25px;font-size:12px;line-height:16px;left:735.40px;letter-spacing:-0.514px;">ung</span>
<span class="t" style="top:1120.05px;font-size:12px;line-height:16px;right:956.01px;letter-spacing:-0.015px;">84,54</span>
<span class="t" style="top:1067.25px;font-size:12px;line-height:16px;left:849.40px;letter-spacing:0.029px;">4800 | Bestandsveränderung- fertige Erzeugnisse</span>
<span class="t" style="top:1082.24px;font-size:10px;line-height:14px;left:849.40px;letter-spacing:0.018px;">201151 Rotbäckchen Kraftpaket Konzentration Shot</span>
<span class="t" style="top:1073.15px;font-size:12px;line-height:16px;right:357.91px;letter-spacing:-0.015px;">84,54</span>
<span class="t" style="top:1073.15px;font-size:12px;line-height:16px;left:1259.30px;letter-spacing:0.085px;">1260 - Drogerie</span>
<span class="t" style="top:1073.15px;font-size:12px;line-height:16px;left:1373.50px;letter-spacing:0.040px;">keine Projektzuordnung</span>
<span class="t" style="top:1103.15px;font-size:12px;line-height:16px;right:357.91px;letter-spacing:-0.015px;">84,54</span>
<span class="t" style="top:1149.25px;font-size:12px;line-height:16px;left:114.00px;font-weight:bold;letter-spacing:-0.208px;">Soll</span>
<span class="t" style="top:1149.25px;font-size:12px;line-height:16px;left:833.50px;font-weight:bold;letter-spacing:-0.430px;">Haben</span>
<div class="b" style="left:114px;top:1164px;width:707px;height:30px;background:#fcf5a1;"></div>
<div class="b" style="left:833px;top:1164px;width:708px;height:30px;background:#fcf5a1;"></div>
<span class="t" style="top:1171.15px;font-size:12px;line-height:16px;left:116.00px;letter-spacing:-0.066px;">Konto</span>
<span class="t" style="top:1171.15px;font-size:12px;line-height:16px;right:956.33px;letter-spacing:-0.327px;">Betrag</span>
<span class="t" style="top:1171.15px;font-size:12px;line-height:16px;left:661.30px;letter-spacing:-0.068px;">Kostenstelle</span>
<span class="t" style="top:1171.15px;font-size:12px;line-height:16px;left:735.40px;letter-spacing:-0.014px;">Budgetprojekt</span>
<span class="t" style="top:1171.15px;font-size:12px;line-height:16px;left:849.40px;letter-spacing:-0.066px;">Konto</span>
<span class="t" style="top:1171.15px;font-size:12px;line-height:16px;right:358.23px;letter-spacing:-0.327px;">Betrag</span>
<span class="t" style="top:1171.15px;font-size:12px;line-height:16px;left:1259.30px;letter-spacing:-0.032px;">Kostenstelle</span>
<span class="t" style="top:1171.15px;font-size:12px;line-height:16px;left:1373.50px;letter-spacing:-0.014px;">Budgetprojekt</span>
<div class="b" style="left:826px;top:1148px;width:1px;height:124px;background:#a3a3a8;"></div>
<div class="b" style="left:115px;top:1194px;width:494px;height:47px;background:#63ee8a;"></div>
<span class="t" style="top:1204.25px;font-size:12px;line-height:16px;left:116.00px;letter-spacing:0.065px;">1095 | Verrechnungskonto Warenausgang (Bestand)</span>
<span class="t" style="top:1219.24px;font-size:10px;line-height:14px;left:116.00px;letter-spacing:0.041px;">201150 Rotbäckchen Kraftpaket Immunschutz Shot</span>
<span class="t" style="top:1210.05px;font-size:12px;line-height:16px;right:956.01px;letter-spacing:-0.015px;">82,90</span>
<span class="t" style="top:1201.85px;font-size:12px;line-height:16px;left:661.30px;letter-spacing:0.103px;">1260 -</span>
<span class="t" style="top:1216.85px;font-size:12px;line-height:16px;left:661.30px;letter-spacing:-0.072px;">Drogerie</span>
<span class="t" style="top:1195.25px;font-size:12px;line-height:16px;left:735.40px;letter-spacing:-0.209px;">keine</span>
<span class="t" style="top:1210.25px;font-size:12px;line-height:16px;left:735.40px;letter-spacing:0.041px;">Projektzuordn</span>
<span class="t" style="top:1225.25px;font-size:12px;line-height:16px;left:735.40px;letter-spacing:-0.514px;">ung</span>
<span class="t" style="top:1248.05px;font-size:12px;line-height:16px;right:956.01px;letter-spacing:-0.015px;">82,90</span>
<span class="t" style="top:1195.25px;font-size:12px;line-height:16px;left:849.40px;letter-spacing:0.029px;">4800 | Bestandsveränderung- fertige Erzeugnisse</span>
<span class="t" style="top:1210.24px;font-size:10px;line-height:14px;left:849.40px;letter-spacing:0.041px;">201150 Rotbäckchen Kraftpaket Immunschutz Shot</span>
<span class="t" style="top:1201.15px;font-size:12px;line-height:16px;right:357.91px;letter-spacing:-0.015px;">82,90</span>
<span class="t" style="top:1201.15px;font-size:12px;line-height:16px;left:1259.30px;letter-spacing:0.085px;">1260 - Drogerie</span>
<span class="t" style="top:1201.15px;font-size:12px;line-height:16px;left:1373.50px;letter-spacing:0.040px;">keine Projektzuordnung</span>
<span class="t" style="top:1231.15px;font-size:12px;line-height:16px;right:357.91px;letter-spacing:-0.015px;">82,90</span>
<div class="b" style="left:105px;top:1275px;width:170px;height:30px;background:#fdfdfe;border:1px solid #c8c3c5;border-radius:4px;box-sizing:border-box;"></div>
<svg class="b" style="left:287px;top:1282px" width="12" height="12" viewBox="0 0 12 12"><circle cx="6" cy="6" r="5.2" fill="#a6d7a8"/><path d="M6 3.4v5.2M3.4 6h5.2" stroke="#e6f4e6" stroke-width="1.6"/></svg>
<span class="t" style="top:1282.69px;font-size:11px;line-height:15px;left:304.00px;color:#b9bcc2;letter-spacing:-0.167px;">Artikel hinzufügen</span>
<span class="t" style="top:1281.85px;font-size:12px;line-height:16px;left:977.80px;font-weight:bold;letter-spacing:-0.020px;">Gesamtbrutto: -854,40 €</span>
<span class="t" style="top:1281.85px;font-size:12px;line-height:16px;left:1195.00px;font-weight:bold;letter-spacing:-0.106px;">Steuerbetrag: 0,00 €</span>
<span class="t" style="top:1281.85px;font-size:12px;line-height:16px;left:1337.40px;font-weight:bold;letter-spacing:-0.017px;">Gesamt: -854,40 €</span>
<span class="t" style="top:1313.85px;font-size:12px;line-height:16px;left:1405.50px;letter-spacing:-0.424px;">Anzahl : 6</span>
<div class="b" style="left:1531px;top:1289px;width:109px;height:111px;background:#f3f4f9;border:1.3px solid #2563b0;border-radius:13px;box-sizing:border-box;"></div>
<span class="t" style="top:1309.00px;font-size:13px;line-height:17px;left:1559.40px;color:#555;">Aktivitä</span>
</body></html>
